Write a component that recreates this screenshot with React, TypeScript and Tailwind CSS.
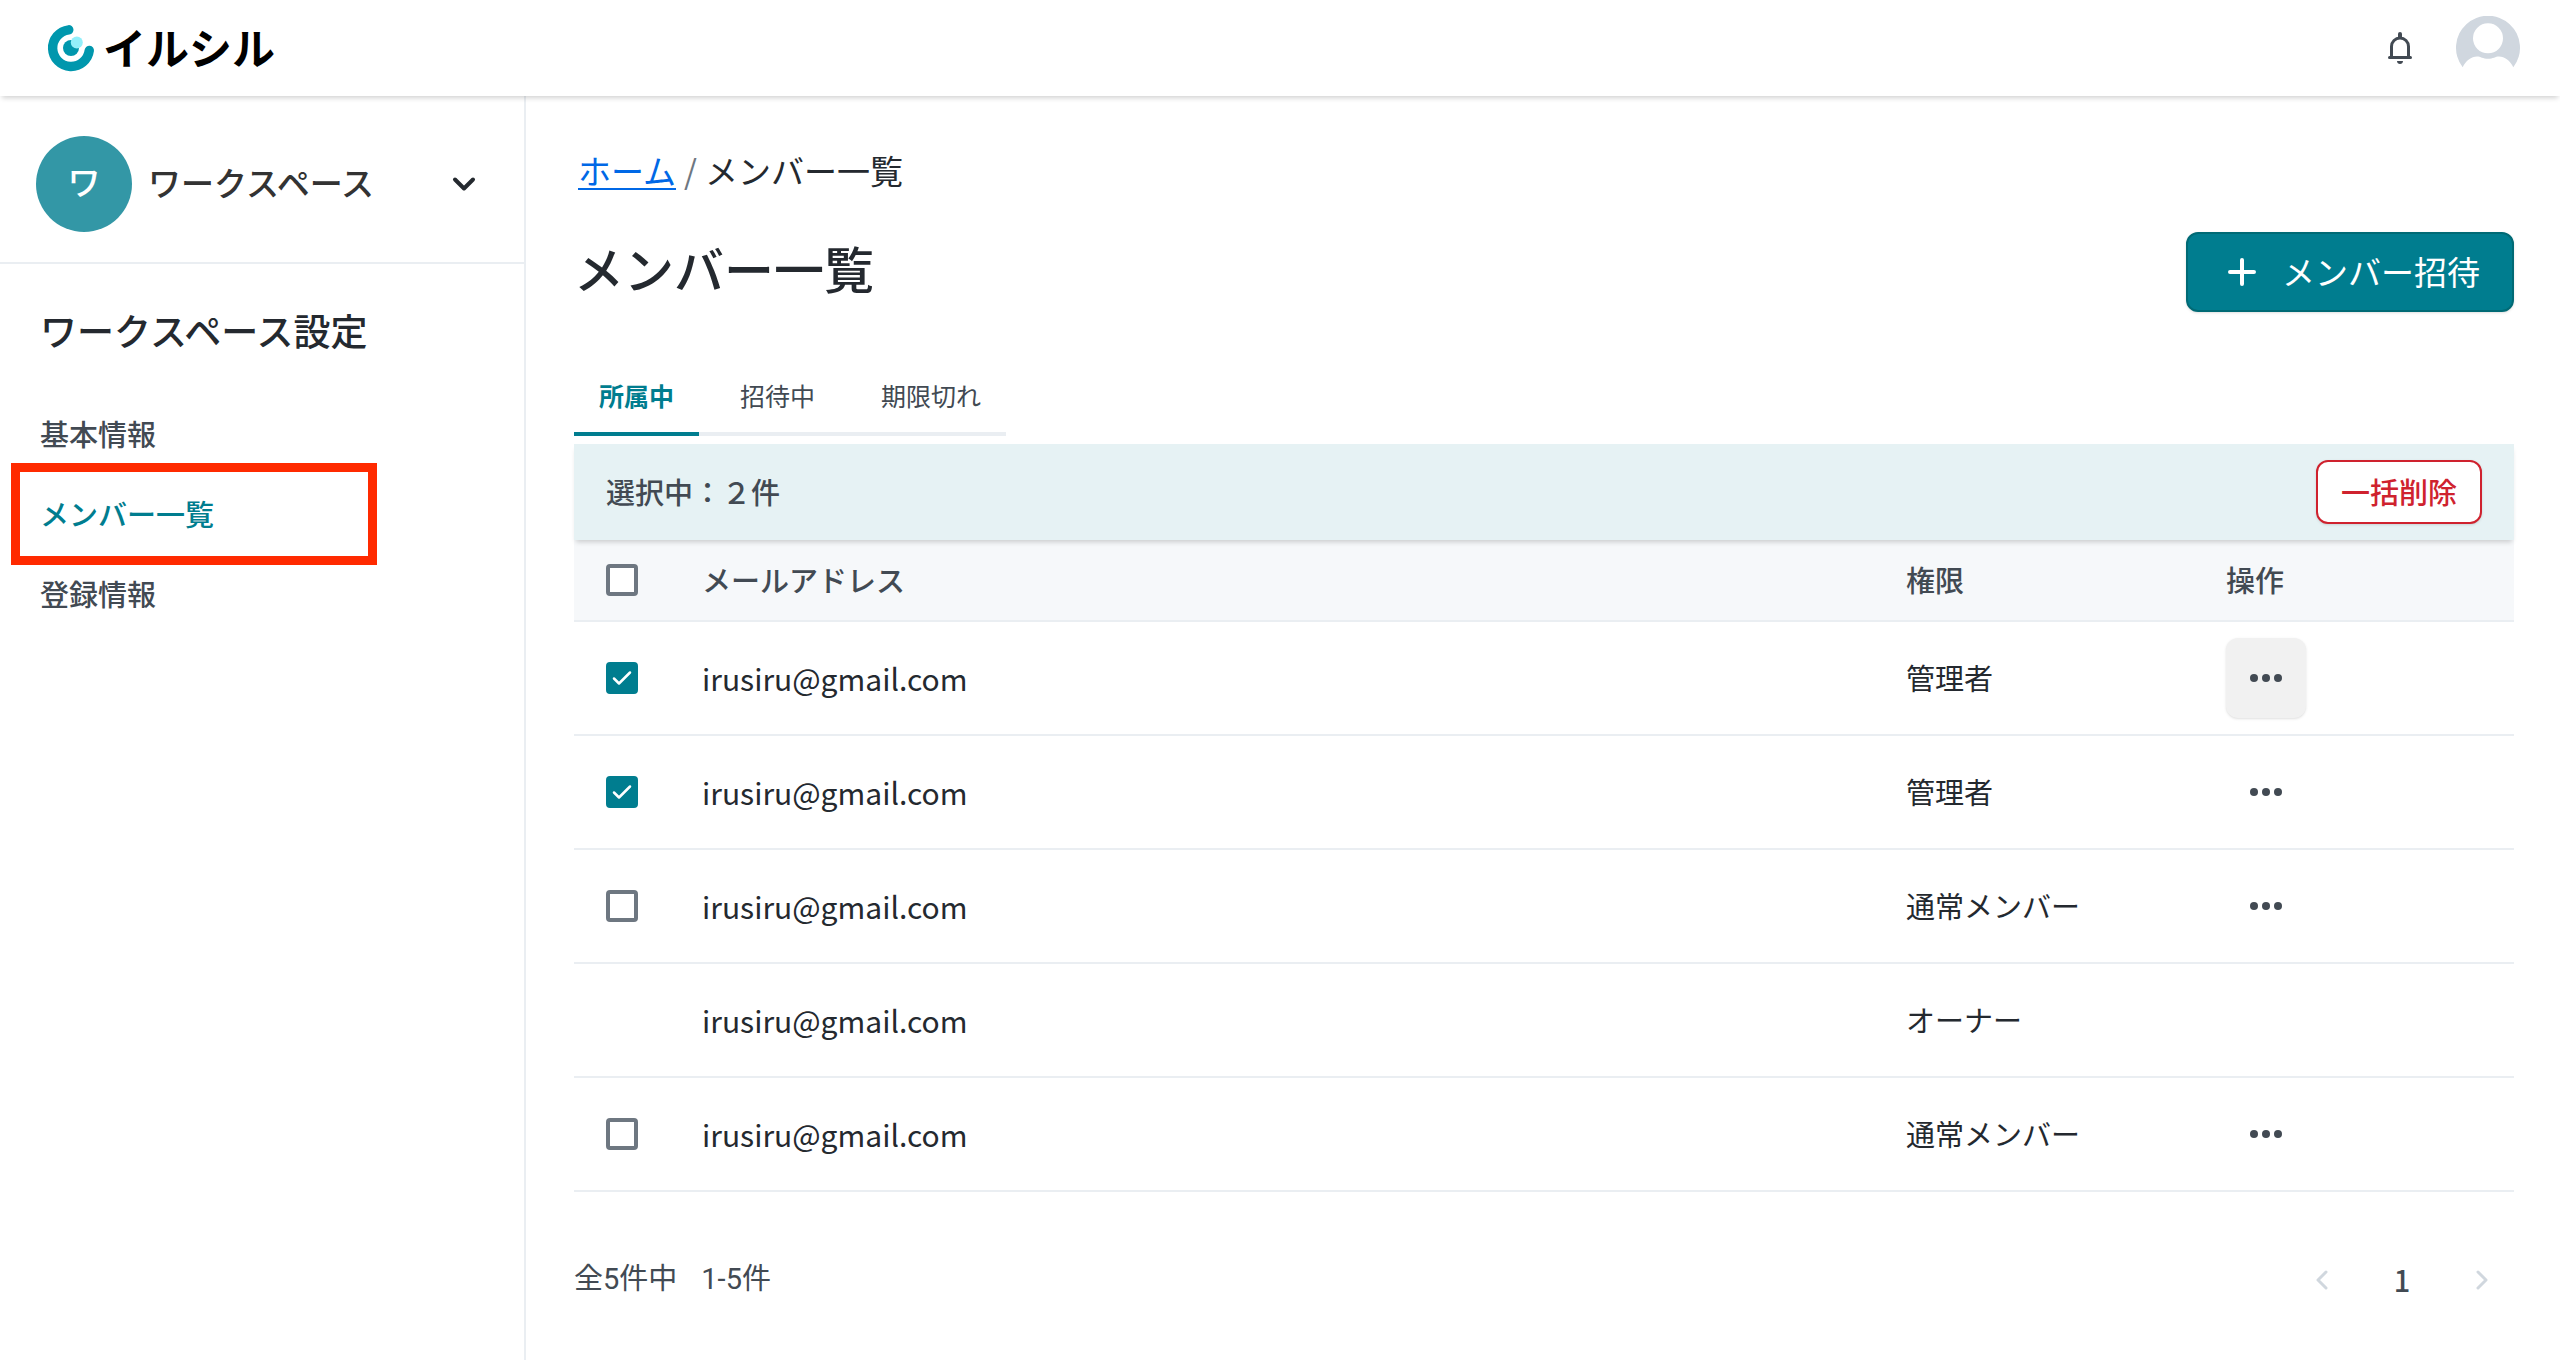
import { useState } from "react";
import clsx from "clsx";

type Member = {
  id: number;
  email: string;
  role: string;
  isOwner?: boolean;
};

const members: Member[] = [
  { id: 1, email: "irusiru@gmail.com", role: "管理者" },
  { id: 2, email: "irusiru@gmail.com", role: "管理者" },
  { id: 3, email: "irusiru@gmail.com", role: "通常メンバー" },
  { id: 4, email: "irusiru@gmail.com", role: "オーナー", isOwner: true },
  { id: 5, email: "irusiru@gmail.com", role: "通常メンバー" },
];

const menus = ["基本情報", "メンバー一覧", "登録情報"];
const tabs = ["所属中", "招待中", "期限切れ"];

const Logo = () => (
  <a href="#" className="flex items-center gap-2 text-black">
    <svg className="size-12" viewBox="0 0 48 48" fill="none" aria-hidden="true">
      <path
        d="M21.8 5.8A18.4 18.4 0 1 0 42.3 26.4"
        stroke="#0097ad"
        strokeWidth="9.4"
        strokeLinecap="round"
      />
      <circle cx="24" cy="24" r="8" fill="#0097ad" />
      <circle cx="29.8" cy="18.6" r="6" fill="#92effa" />
    </svg>
    <span className="pb-1 text-[43px] leading-[48px] font-bold">イルシル</span>
  </a>
);

const BellIcon = () => (
  <svg className="h-8 w-6" viewBox="0 0 24 32" fill="none" aria-hidden="true">
    <path d="M12 2V5" stroke="#424a53" strokeWidth="4" strokeLinecap="round" />
    <path
      d="M3.5 25V14.5A8.5 8.5 0 0 1 20.5 14.5V25"
      stroke="#424a53"
      strokeWidth="3"
    />
    <path d="M1.5 25.5H22.5" stroke="#424a53" strokeWidth="3" strokeLinecap="round" />
    <path d="M9 29H15C15 30.8 13.7 32 12 32C10.3 32 9 30.8 9 29Z" fill="#424a53" />
  </svg>
);

const AvatarIcon = () => (
  <svg className="size-16" viewBox="0 0 64 64" aria-hidden="true">
    <path
      d="M6.7 51.3A32 32 0 1 1 57.3 51.3C54.5 45 48.5 40.5 43 40.5C39.5 40.5 37 42.8 32 42.8C27 42.8 24.5 40.5 21 40.5C15.5 40.5 9.5 45 6.7 51.3Z"
      fill="#d0d7df"
    />
    <circle cx="32" cy="22.3" r="15" fill="white" />
  </svg>
);

const Chevron = ({ d, className }: { d: string; className: string }) => (
  <svg className={className} viewBox="0 0 32 32" fill="none" aria-hidden="true">
    <path
      d={d}
      stroke="currentColor"
      strokeLinecap="round"
      strokeLinejoin="round"
    />
  </svg>
);

const Checkbox = ({
  label,
  checked,
  onChange,
}: {
  label: string;
  checked: boolean;
  onChange: () => void;
}) => (
  <label className="relative block size-8">
    <input
      type="checkbox"
      aria-label={label}
      checked={checked}
      onChange={onChange}
      className="peer block size-8 appearance-none rounded border-4 border-[#6e7781] bg-white checked:border-[#007d8f] checked:bg-[#007d8f]"
    />
    <svg
      className="pointer-events-none absolute inset-0 hidden size-8 peer-checked:block"
      viewBox="0 0 32 32"
      fill="none"
      aria-hidden="true"
    >
      <path
        d="M8 16.5L13 21.5L24 10.5"
        stroke="white"
        strokeWidth="2.5"
        strokeLinecap="round"
        strokeLinejoin="round"
      />
    </svg>
  </label>
);

const Sidebar = () => (
  <aside className="w-[526px] shrink-0 border-r-2 border-[#eaeef2]">
    <button
      type="button"
      className="flex w-full items-center border-b-2 border-[#eaeef2] px-9 pt-10 pb-[30px] text-[#333333]"
    >
      <span className="flex size-24 items-center justify-center rounded-full bg-[#3397a6] pb-1 text-[33px] font-medium text-white">
        ワ
      </span>
      <span className="ml-4 flex-1 pb-1 text-left text-[33px] leading-[48px] font-medium">
        ワークスペース
      </span>
      <Chevron
        d="M7 11.5L16 20.5L25 11.5"
        className="mr-2 size-8 stroke-4 text-[#24292f]"
      />
    </button>

    <nav className="pt-[42px]">
      <h2 className="pl-10 text-[37px] leading-[48px] font-medium">
        ワークスペース設定
      </h2>
      <ul className="mt-10 text-[29px] text-[#424a53]">
        {menus.map((menu) => (
          <li key={menu} className="relative">
            <a
              href="#"
              className={clsx(
                "flex h-20 items-center pl-10 font-medium",
                menu === "メンバー一覧" && "text-[#007d8f]"
              )}
            >
              {menu}
            </a>
            {menu === "メンバー一覧" && (
              <span className="pointer-events-none absolute -inset-y-[11px] left-[11px] w-[366px] border-9 border-[#ff2a00]" />
            )}
          </li>
        ))}
      </ul>
    </nav>
  </aside>
);

export default function App() {
  const [activeTab, setActiveTab] = useState("所属中");
  const [selected, setSelected] = useState<number[]>([1, 2]);

  const selectable = members.filter((m) => !m.isOwner);
  const allSelected = selected.length === selectable.length;

  const toggle = (id: number) => {
    setSelected(
      selected.includes(id)
        ? selected.filter((s) => s !== id)
        : [...selected, id]
    );
  };

  return (
    <div
      lang="ja"
      className="flex min-h-screen flex-col bg-white font-['Noto_Sans_CJK_JP',sans-serif] text-[#24292f]"
    >
      <header className="relative z-10 flex h-24 items-center justify-between bg-white pr-10 pl-[47px] shadow-[0_4px_5px_-2px_rgba(0,0,0,0.18)]">
        <Logo />
        <div className="flex items-center gap-11">
          <button type="button" aria-label="通知">
            <BellIcon />
          </button>
          <button type="button" aria-label="アカウント">
            <AvatarIcon />
          </button>
        </div>
      </header>

      <div className="flex flex-1">
        <Sidebar />

        <main className="min-w-0 flex-1 pt-[50px] pr-[46px] pl-12">
          <nav className="flex items-center gap-2 pl-1 text-[33px] leading-[48px]">
            <a
              href="#"
              className="text-[#0068e6] underline decoration-2 underline-offset-4"
            >
              ホーム
            </a>
            <span className="text-[#6e7781]">/</span>
            <span>メンバー一覧</span>
          </nav>

          <div className="mt-[38px] flex items-start justify-between">
            <h1 className="text-[50px] leading-[70px] font-medium">
              メンバー一覧
            </h1>
            <button
              type="button"
              className="flex h-20 items-center rounded-xl border-2 border-[#006a75] bg-[#007d8f] px-[38px] pr-8 text-[33px] text-white shadow-sm"
            >
              <svg className="mr-6 size-8" viewBox="0 0 32 32" aria-hidden="true">
                <path
                  d="M16 4V28M4 16H28"
                  stroke="white"
                  strokeWidth="4"
                  strokeLinecap="round"
                />
              </svg>
              メンバー招待
            </button>
          </div>

          <div role="tablist" className="mt-12 flex">
            {tabs.map((tab, i) => (
              <div
                key={tab}
                className={clsx("border-b-4 border-[#eaeef2]", i > 0 && "pl-4")}
              >
                <button
                  type="button"
                  role="tab"
                  aria-selected={activeTab === tab}
                  onClick={() => setActiveTab(tab)}
                  className={clsx(
                    "-mb-1 flex h-[76px] items-center border-b-4 px-[25px] text-[25px]",
                    activeTab === tab
                      ? "border-[#007d8f] font-bold text-[#007d8f]"
                      : "border-transparent text-[#424a53]"
                  )}
                >
                  {tab}
                </button>
              </div>
            ))}
          </div>

          <div className="relative mt-2 flex h-24 items-center justify-between bg-[#e6f2f4] px-8 text-[29px] font-medium shadow-[0_4px_5px_-2px_rgba(0,0,0,0.18)]">
            <span className="text-[#424a53]">選択中：２件</span>
            <button
              type="button"
              className="h-16 rounded-xl border-2 border-[#cf222e] bg-white px-[23px] text-[#cf222e] shadow-sm"
            >
              一括削除
            </button>
          </div>

          <table className="w-full table-fixed border-separate border-spacing-0 text-left text-[29px]">
            <thead className="bg-[#f6f8fa] text-[#424a53]">
              <tr className="h-[82px] *:border-b-2 *:border-[#eaeef2]">
                <th className="w-24 pl-8">
                  <Checkbox
                    label="すべて選択"
                    checked={allSelected}
                    onChange={() =>
                      setSelected(allSelected ? [] : selectable.map((m) => m.id))
                    }
                  />
                </th>
                <th className="px-8 font-medium">メールアドレス</th>
                <th className="w-80 px-8 font-medium">権限</th>
                <th className="w-80 px-8 font-medium">操作</th>
              </tr>
            </thead>
            <tbody>
              {members.map((member) => (
                <tr
                  key={member.id}
                  className="h-[114px] *:border-b-2 *:border-[#eaeef2]"
                >
                  <td className="pl-8">
                    {!member.isOwner && (
                      <Checkbox
                        label={`${member.email} を選択`}
                        checked={selected.includes(member.id)}
                        onChange={() => toggle(member.id)}
                      />
                    )}
                  </td>
                  <td className="px-8 text-[30px]">{member.email}</td>
                  <td className="px-8">{member.role}</td>
                  <td className="px-8">
                    {!member.isOwner && (
                      <button
                        type="button"
                        aria-label="操作メニュー"
                        className={clsx(
                          "flex size-20 items-center justify-center rounded-xl",
                          member.id === 1 && "bg-[#f1f1f1] shadow-sm"
                        )}
                      >
                        <svg
                          className="h-2 w-8"
                          viewBox="0 0 32 8"
                          fill="#424a53"
                          aria-hidden="true"
                        >
                          <circle cx="4" cy="4" r="4" />
                          <circle cx="16" cy="4" r="4" />
                          <circle cx="28" cy="4" r="4" />
                        </svg>
                      </button>
                    )}
                  </td>
                </tr>
              ))}
            </tbody>
          </table>

          <div className="mt-14 flex items-center justify-between text-[29px] text-[#424a53]">
            <p className="flex gap-6 font-[Roboto,'Noto_Sans_CJK_JP',sans-serif]">
              <span>全5件中</span>
              <span>1-5件</span>
            </p>
            <div className="flex gap-4">
              <button
                type="button"
                aria-label="前のページ"
                className="flex size-16 items-center justify-center text-[#d0d7de]"
              >
                <Chevron d="M20 8L12 16L20 24" className="size-8 stroke-3" />
              </button>
              <button type="button" className="size-16 font-medium">
                1
              </button>
              <button
                type="button"
                aria-label="次のページ"
                className="flex size-16 items-center justify-center text-[#d0d7de]"
              >
                <Chevron d="M12 8L20 16L12 24" className="size-8 stroke-3" />
              </button>
            </div>
          </div>
        </main>
      </div>
    </div>
  );
}
